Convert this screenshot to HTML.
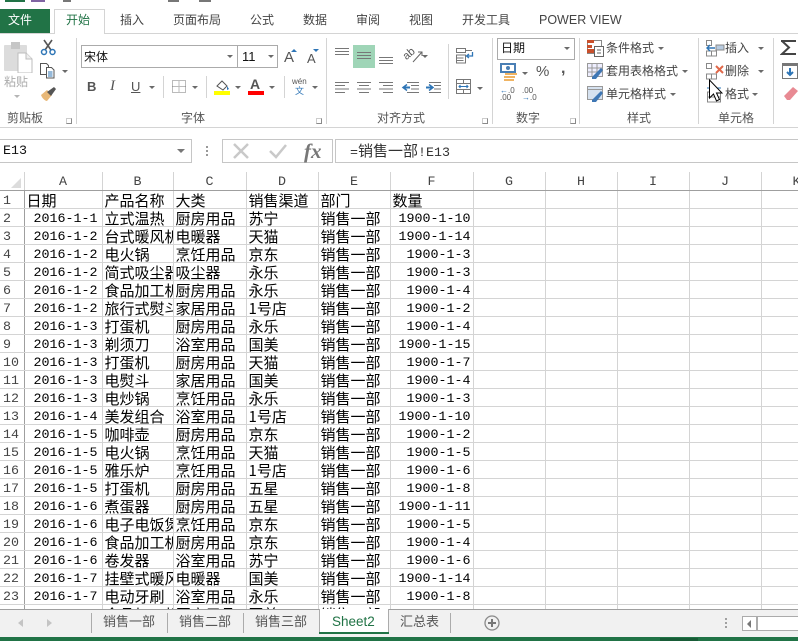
<!DOCTYPE html>
<html lang="zh"><head><meta charset="utf-8"><title>Excel</title>
<style>
html,body{margin:0;padding:0;background:#fff}
#r{position:relative;width:798px;height:641px;overflow:hidden;background:#fff;font-family:"Liberation Sans","Noto Sans CJK SC",sans-serif;color:#444}
#r>*{position:absolute}
.t{font-size:12px;line-height:16px;white-space:nowrap;color:#444}
.l{background:#d4d4d4;width:1px}
.c{width:0;height:0;border-left:3px solid transparent;border-right:3px solid transparent;border-top:3px solid #6a6a6a}
.g{width:6px;height:6px;border:1px solid #8a8a8a;border-top-color:#ccc;border-left-color:#ccc;box-sizing:border-box}
table{border-collapse:collapse;table-layout:fixed;left:0;top:172px;width:832px}
td,th{padding:2px 0 0 2px;height:18px;line-height:15px;box-sizing:border-box;border-right:1px solid #d4d4d4;border-bottom:1px solid #d4d4d4;overflow:hidden;white-space:nowrap;font-weight:normal;color:#000;font-family:"WenQuanYi Zen Hei","Noto Sans CJK SC",sans-serif;font-size:15px;text-align:left}
th{text-align:center;color:#444;font-family:"Liberation Mono",monospace;font-size:13.33px;padding:4px 0 0;line-height:13px}
tr.h th{color:#444;border-bottom:1px solid #9f9f9f}
th.n{border-right:1px solid #9f9f9f;text-align:left;padding-left:3px}
td.d,td.q{text-align:right;font-family:"Liberation Mono",monospace;font-size:13.33px;padding:4px 2px 0 0;line-height:13px}
td.d{padding-right:4px}
</style></head><body><div id="r">

<!-- cropped QAT -->
<div style="left:5px;top:0;width:20px;height:2px;background:#217346"></div>
<div style="left:31px;top:0;width:14px;height:2px;background:#8064a2"></div>
<div style="left:63px;top:0;width:8px;height:2px;background:#777"></div>
<div style="left:168px;top:0;width:11px;height:2px;background:#777"></div>
<div style="left:199px;top:0;width:12px;height:2px;background:#777"></div>

<!-- Tabs -->
<div style="left:0;top:9px;width:50px;height:25px;background:#217346"></div>
<div class="t" style="left:8px;top:12px;color:#fff">文件</div>
<div style="left:54px;top:9px;width:51px;height:25px;background:#fff;border:1px solid #d4d4d4;border-bottom:none;box-sizing:border-box"></div>
<div style="left:0;top:33px;width:54px;height:1px;background:#d4d4d4"></div>
<div style="left:105px;top:33px;width:693px;height:1px;background:#d4d4d4"></div>
<div class="t" style="left:66px;top:12px;color:#217346">开始</div>
<div class="t" style="left:120px;top:12px">插入</div>
<div class="t" style="left:173px;top:12px">页面布局</div>
<div class="t" style="left:250px;top:12px">公式</div>
<div class="t" style="left:303px;top:12px">数据</div>
<div class="t" style="left:356px;top:12px">审阅</div>
<div class="t" style="left:409px;top:12px">视图</div>
<div class="t" style="left:462px;top:12px">开发工具</div>
<div class="t" style="left:539px;top:12px;font-size:12.5px">POWER VIEW</div>

<!-- Ribbon bottom / separators -->
<div style="left:0;top:127px;width:798px;height:1px;background:#d4d4d4"></div>
<div class="l" style="left:76px;top:38px;height:86px"></div>
<div class="l" style="left:326px;top:38px;height:86px"></div>
<div class="l" style="left:492px;top:38px;height:86px"></div>
<div class="l" style="left:579px;top:38px;height:86px"></div>
<div class="l" style="left:698px;top:38px;height:86px"></div>
<div class="l" style="left:773px;top:38px;height:86px"></div>

<!-- Clipboard -->
<svg style="left:3px;top:41px" width="31" height="32" viewBox="0 0 31 32"><rect x="1" y="4" width="23" height="26" rx="1" fill="#dcdcdc"/><rect x="8" y="1" width="9" height="7" fill="#c6c6c6"/><path d="M15 12h8l6 6v14H15z" fill="#fff" stroke="#bdbdbd"/><path d="M23 12v6h6" fill="#eee" stroke="#bdbdbd"/></svg>
<div class="t" style="left:4px;top:74px;color:#ababab">粘贴</div>
<div class="c" style="left:14px;top:95px;border-top-color:#b5b5b5;border-left-width:3px"></div>
<svg style="left:40px;top:39px" width="17" height="17" viewBox="0 0 17 17"><path d="M4 1l7 10M12 1L5 11" stroke="#555" stroke-width="1.6" fill="none"/><circle cx="4" cy="13" r="2.5" fill="none" stroke="#2e75b6" stroke-width="1.5"/><circle cx="12.5" cy="13" r="2.5" fill="none" stroke="#2e75b6" stroke-width="1.5"/></svg>
<svg style="left:39px;top:63px" width="17" height="16" viewBox="0 0 17 16"><path d="M1.500 .5h6l2 2v9h-8z" fill="#fff" stroke="#555"/><path d="M7.500 4.500h5l2.500 2.500v8H7.500z" fill="#fff" stroke="#555"/><path d="M9 9h4.500M9 11h4.500M9 13h4.500" stroke="#2e75b6"/></svg>
<div class="c" style="left:62px;top:70px"></div>
<svg style="left:40px;top:86px" width="17" height="16" viewBox="0 0 17 16"><path d="M1 9l6-5 5 5-5 6C5 15 2 12 1 9z" fill="#e8b878"/><path d="M7 6l7-5 2 2-5 7z" fill="#555"/></svg>
<div class="t" style="left:7px;top:110px;color:#555">剪贴板</div>
<div class="g" style="left:66px;top:118px"></div>

<!-- Font -->
<div style="left:81px;top:45px;width:157px;height:23px;border:1px solid #ababab;box-sizing:border-box"></div>
<div style="left:237px;top:45px;width:41px;height:23px;border:1px solid #ababab;box-sizing:border-box"></div>
<div class="t" style="left:84px;top:49px;color:#111">宋体</div>
<div class="c" style="left:227px;top:55px"></div>
<div class="t" style="left:242px;top:49px;color:#111;font-size:13px">11</div>
<div class="c" style="left:268px;top:55px"></div>
<div class="t" style="left:284px;top:50px;font-size:15px;color:#555">A</div>
<div style="left:291px;top:49px;width:0;height:0;border:3px solid transparent;border-bottom:3px solid #2e75b6;border-top:0"></div>
<div class="t" style="left:307px;top:51px;font-size:13px;color:#555">A</div>
<div style="left:313px;top:49px;width:0;height:0;border:3px solid transparent;border-top:3px solid #2e75b6;border-bottom:0"></div>

<div class="t" style="left:87px;top:79px;font-weight:bold;font-size:13px;color:#555">B</div>
<div class="t" style="left:110px;top:78px;font-style:italic;font-family:'Liberation Serif';font-size:15px;color:#555">I</div>
<div class="t" style="left:131px;top:79px;font-size:13px;color:#555;text-decoration:underline">U</div>
<div class="c" style="left:149px;top:86px"></div>
<div class="l" style="left:163px;top:76px;height:22px"></div>
<svg style="left:172px;top:80px" width="14" height="13" viewBox="0 0 14 13"><path d="M.5 .5h13v12H.500zM7 .5v12M.5 6.500h13" fill="none" stroke="#777" stroke-dasharray="1 1"/></svg>
<div class="c" style="left:192px;top:86px"></div>
<div class="l" style="left:206px;top:76px;height:22px"></div>
<svg style="left:215px;top:79px" width="16" height="12" viewBox="0 0 16 12"><path d="M2 7l5-5 5 5-4 4z" fill="#fff" stroke="#555"/><path d="M12 7l2 3-2 1z" fill="#2e75b6"/></svg>
<div style="left:214px;top:91px;width:16px;height:4px;background:#ff0"></div>
<div class="c" style="left:235px;top:86px"></div>
<div class="t" style="left:250px;top:76px;font-weight:bold;font-size:14px;color:#555">A</div>
<div style="left:248px;top:91px;width:16px;height:4px;background:#f00"></div>
<div class="c" style="left:269px;top:86px"></div>
<div class="l" style="left:284px;top:76px;height:22px"></div>
<div class="t" style="left:292px;top:77px;font-size:8px;line-height:9px;color:#555">wén</div>
<div class="t" style="left:295px;top:86px;font-size:9px;line-height:10px;color:#2e75b6">文</div>
<div class="c" style="left:312px;top:86px"></div>
<div class="t" style="left:181px;top:110px;color:#555">字体</div>
<div class="g" style="left:316px;top:118px"></div>

<!-- Alignment -->
<div style="left:353px;top:45px;width:22px;height:23px;background:#9fd5b7"></div>
<svg style="left:333px;top:44px" width="110" height="52" viewBox="0 0 110 52" stroke="#777" fill="none">
<path d="M2 4.500h14M2 7.500h14M2 10.500h14"/>
<path d="M24 8.500h14M24 11.500h14M24 14.500h14"/>
<path d="M46 13.500h14M46 16.500h14M46 19.500h14"/>
<path d="M2 38.500h14M2 41.500h10M2 45h14M2 48.500h10"/>
<path d="M24 38.500h14M26 41.500h10M24 45h14M26 48.500h10"/>
<path d="M46 38.500h14M50 41.500h10M46 45h14M50 48.500h10"/>
<path d="M71 43.500h6" stroke="#2e75b6" stroke-width="2"/><path d="M74 40.500l-4 3 4 3" stroke="#2e75b6" stroke-width="1.500"/>
<path d="M74 38.500h12M78 41.500h8M78 45h8M74 48.500h12"/>
<path d="M93 43.500h6" stroke="#2e75b6" stroke-width="2"/><path d="M96 40.500l4 3-4 3" stroke="#2e75b6" stroke-width="1.500"/>
<path d="M96 38.500h12M101 41.500h7M101 45h7M96 48.500h12"/>
</svg>
<div class="t" style="left:403px;top:46px;font-size:11px;color:#555;transform:rotate(-40deg)">ab</div>
<svg style="left:412px;top:50px" width="12" height="14" viewBox="0 0 12 14"><path d="M1 12L10 2M6 2h4v4" stroke="#666" fill="none"/></svg>
<div class="c" style="left:422px;top:55px"></div>
<div class="l" style="left:448px;top:44px;height:55px"></div>
<svg style="left:456px;top:47px" width="18" height="17" viewBox="0 0 18 17" fill="none"><path d="M.5 1.500h9v4h-9zM.5 8h9v8h-9z" stroke="#777"/><path d="M9.500 3.500H16M.5 11h7M.5 13.500h7" stroke="#777"/><path d="M16.500 5v4H11M13 7l-2.500 2 2.500 2" stroke="#2e75b6" stroke-width="1.300"/></svg>
<svg style="left:456px;top:79px" width="16" height="16" viewBox="0 0 16 16" fill="none"><path d="M.5 .5h14v14H.5zM.5 4.500h14M.5 10.500h14M7.500 .5v4M7.500 10.500v4" stroke="#777"/><path d="M3 7.500h9M4.500 6L3 7.500 4.500 9M10.500 6L12 7.500 10.500 9" stroke="#2e75b6"/></svg>
<div class="c" style="left:477px;top:87px"></div>
<div class="t" style="left:377px;top:110px;color:#555">对齐方式</div>
<div class="g" style="left:482px;top:118px"></div>

<!-- Number -->
<div style="left:497px;top:38px;width:78px;height:22px;border:1px solid #ababab;box-sizing:border-box"></div>
<div class="t" style="left:501px;top:40px;color:#111">日期</div>
<div class="c" style="left:564px;top:47px"></div>
<svg style="left:500px;top:63px" width="18" height="18" viewBox="0 0 18 18"><rect x="0" y="0" width="16" height="10" fill="#4a7fb5"/><rect x="2" y="2" width="12" height="6" fill="#fff"/><circle cx="8" cy="5" r="2" fill="#4a7fb5"/><path d="M5 10h12v2H5zM4 13h11v2H4zM4 16h10v2H4z" fill="#f0b463"/></svg>
<div class="c" style="left:522px;top:72px"></div>
<div class="t" style="left:536px;top:64px;font-size:15px;color:#555">%</div>
<div class="t" style="left:561px;top:61px;font-size:16px;font-weight:bold;color:#555">,</div>
<div class="t" style="left:500px;top:87px;font-size:8px;line-height:7px;color:#555"><span style="color:#2e75b6">←</span>.0<br>.00</div>
<div class="t" style="left:522px;top:87px;font-size:8px;line-height:7px;color:#555">.00<br><span style="color:#2e75b6">→</span>.0</div>
<div class="t" style="left:516px;top:110px;color:#555">数字</div>
<div class="g" style="left:570px;top:118px"></div>

<!-- Styles -->
<svg style="left:587px;top:40px" width="17" height="17" viewBox="0 0 17 17"><rect x=".5" y=".5" width="14" height="13" fill="#fff" stroke="#888"/><rect x="0" y="0" width="7" height="3" fill="#c9502c"/><rect x="0" y="5" width="5" height="3" fill="#c9502c"/><rect x="0" y="9" width="7" height="4" fill="#c9502c"/><rect x="7.500" y="6.500" width="9" height="10" fill="#fff" stroke="#666"/><path d="M10 10h4M10 13h4" stroke="#666"/></svg>
<div class="t" style="left:606px;top:40px">条件格式</div>
<div class="c" style="left:658px;top:47px"></div>
<svg style="left:587px;top:63px" width="17" height="17" viewBox="0 0 17 17"><path d="M.5 .5h15v13H.500zM5 .5v13M10 .5v13M.5 5h15M.5 9h15" fill="#eef" stroke="#999"/><path d="M5 14l9-9 2 2-7 9H5z" fill="#3f77b4"/></svg>
<div class="t" style="left:606px;top:63px">套用表格格式</div>
<div class="c" style="left:682px;top:70px"></div>
<svg style="left:587px;top:86px" width="17" height="17" viewBox="0 0 17 17"><path d="M.5 .5h15v13H.500z" fill="#d6e2f0" stroke="#999"/><path d="M.5 3.500h15" stroke="#999"/><path d="M5 14l9-9 2 2-7 9H5z" fill="#3f77b4"/></svg>
<div class="t" style="left:606px;top:86px">单元格样式</div>
<div class="c" style="left:670px;top:93px"></div>
<div class="t" style="left:627px;top:110px;color:#555">样式</div>

<!-- Cells -->
<svg style="left:706px;top:40px" width="20" height="17" viewBox="0 0 20 17" fill="none"><path d="M.5 .5h5v5h-5zM.5 11h5v5h-5zM5.500 11h5v5h-5z" stroke="#888"/><rect x="10" y="5" width="8" height="5" fill="#b8cbe0" stroke="#888"/><path d="M1 8h8M4 5L1 8l3 3" stroke="#2e75b6" stroke-width="1.400"/></svg>
<div class="t" style="left:725px;top:40px">插入</div>
<div class="c" style="left:758px;top:47px"></div>
<svg style="left:706px;top:63px" width="20" height="17" viewBox="0 0 20 17" fill="none"><path d="M.5 .5h5v5h-5zM.5 11h5v5h-5zM5.500 11h5v5h-5z" stroke="#888"/><path d="M10 3l7 7M17 3l-7 7" stroke="#e0684a" stroke-width="2"/></svg>
<div class="t" style="left:725px;top:63px">删除</div>
<div class="c" style="left:758px;top:70px"></div>
<svg style="left:706px;top:86px" width="20" height="17" viewBox="0 0 20 17" fill="none"><path d="M1.500 6h13v10h-13zM1.500 11h13" stroke="#888"/><path d="M1 2h4M9 2h6" stroke="#2e75b6"/></svg>
<div class="t" style="left:725px;top:86px">格式</div>
<div class="c" style="left:752px;top:93px"></div>
<div class="t" style="left:718px;top:110px;color:#555">单元格</div>
<svg style="left:708px;top:79px" width="15" height="24" viewBox="0 0 15 24"><path d="M1.500 1v18l4-4 3 7 3-1.500-3-6.500h5.500z" fill="#fff" stroke="#000"/></svg>

<!-- Editing -->
<svg style="left:780px;top:40px" width="18" height="15" viewBox="0 0 18 15"><path d="M1 1h15M2 1l7 6.500L2 14h14" fill="none" stroke="#444" stroke-width="2"/></svg>
<svg style="left:782px;top:63px" width="16" height="17" viewBox="0 0 16 17"><rect x=".5" y=".5" width="15" height="15" fill="#fff" stroke="#777"/><rect x="0" y="0" width="16" height="3" fill="#777"/><path d="M8 5v7M5 9l3 3 3-3" stroke="#2e75b6" stroke-width="2" fill="none"/></svg>
<svg style="left:783px;top:86px" width="15" height="15" viewBox="0 0 15 15"><path d="M1 10L10 1l5 4-8 9H4z" fill="#e88a93"/></svg>

<!-- Formula bar -->
<div style="left:-2px;top:139px;width:194px;height:24px;border:1px solid #c6c6c6;box-sizing:border-box"></div>
<div style="left:3px;top:144px;font:13.33px/16px 'Liberation Mono',monospace;color:#111">E13</div>
<div class="c" style="left:177px;top:149px;border-left-width:4px;border-right-width:4px;border-top:4px solid #777"></div>
<div style="left:206px;top:146px;width:2px;height:2px;background:#999;box-shadow:0 4px #999,0 8px #999"></div>
<div style="left:222px;top:139px;width:111px;height:24px;border:1px solid #c6c6c6;box-sizing:border-box"></div>
<svg style="left:232px;top:143px" width="18" height="16" viewBox="0 0 18 16"><path d="M2 1l14 14M16 1L2 15" stroke="#c9c9c9" stroke-width="2.500"/></svg>
<svg style="left:268px;top:143px" width="20" height="16" viewBox="0 0 20 16"><path d="M2 8l6 6L18 2" fill="none" stroke="#c9c9c9" stroke-width="2.500"/></svg>
<div style="left:304px;top:139px;font:italic bold 21px/24px 'Liberation Serif',serif;color:#777">fx</div>
<div style="left:335px;top:139px;width:470px;height:24px;border:1px solid #c6c6c6;box-sizing:border-box"></div>
<div style="left:350px;top:144px;font:13.33px/16px 'Liberation Mono','WenQuanYi Zen Hei',monospace;color:#333">=<span style="font-size:15px;font-family:'WenQuanYi Zen Hei'">销售一部</span>!E13</div>

<!-- Corner -->
<svg style="left:10px;top:177px" width="12" height="12"><path d="M11 1v10H1z" fill="#dcdcdc"/></svg>

<!-- Grid -->
<table>
<colgroup><col style="width:24px"><col style="width:78px"><col style="width:71px"><col style="width:73px"><col style="width:72px"><col style="width:72px"><col style="width:83px"><col style="width:72px"><col style="width:72px"><col style="width:72px"><col style="width:72px"><col style="width:71px"></colgroup>
<tr class="h"><th style="border-right:1px solid #d4d4d4"></th><th>A</th><th>B</th><th>C</th><th>D</th><th>E</th><th>F</th><th>G</th><th>H</th><th>I</th><th>J</th><th>K</th></tr>
<tr><th class="n">1</th><td>日期</td><td>产品名称</td><td>大类</td><td>销售渠道</td><td>部门</td><td>数量</td><td></td><td></td><td></td><td></td><td></td></tr>
<tr><th class="n">2</th><td class="d">2016-1-1</td><td>立式温热</td><td>厨房用品</td><td>苏宁</td><td>销售一部</td><td class="q">1900-1-10</td><td></td><td></td><td></td><td></td><td></td></tr>
<tr><th class="n">3</th><td class="d">2016-1-2</td><td>台式暖风机</td><td>电暖器</td><td>天猫</td><td>销售一部</td><td class="q">1900-1-14</td><td></td><td></td><td></td><td></td><td></td></tr>
<tr><th class="n">4</th><td class="d">2016-1-2</td><td>电火锅</td><td>烹饪用品</td><td>京东</td><td>销售一部</td><td class="q">1900-1-3</td><td></td><td></td><td></td><td></td><td></td></tr>
<tr><th class="n">5</th><td class="d">2016-1-2</td><td>简式吸尘器</td><td>吸尘器</td><td>永乐</td><td>销售一部</td><td class="q">1900-1-3</td><td></td><td></td><td></td><td></td><td></td></tr>
<tr><th class="n">6</th><td class="d">2016-1-2</td><td>食品加工机</td><td>厨房用品</td><td>永乐</td><td>销售一部</td><td class="q">1900-1-4</td><td></td><td></td><td></td><td></td><td></td></tr>
<tr><th class="n">7</th><td class="d">2016-1-2</td><td>旅行式熨斗</td><td>家居用品</td><td>1号店</td><td>销售一部</td><td class="q">1900-1-2</td><td></td><td></td><td></td><td></td><td></td></tr>
<tr><th class="n">8</th><td class="d">2016-1-3</td><td>打蛋机</td><td>厨房用品</td><td>永乐</td><td>销售一部</td><td class="q">1900-1-4</td><td></td><td></td><td></td><td></td><td></td></tr>
<tr><th class="n">9</th><td class="d">2016-1-3</td><td>剃须刀</td><td>浴室用品</td><td>国美</td><td>销售一部</td><td class="q">1900-1-15</td><td></td><td></td><td></td><td></td><td></td></tr>
<tr><th class="n">10</th><td class="d">2016-1-3</td><td>打蛋机</td><td>厨房用品</td><td>天猫</td><td>销售一部</td><td class="q">1900-1-7</td><td></td><td></td><td></td><td></td><td></td></tr>
<tr><th class="n">11</th><td class="d">2016-1-3</td><td>电熨斗</td><td>家居用品</td><td>国美</td><td>销售一部</td><td class="q">1900-1-4</td><td></td><td></td><td></td><td></td><td></td></tr>
<tr><th class="n">12</th><td class="d">2016-1-3</td><td>电炒锅</td><td>烹饪用品</td><td>永乐</td><td>销售一部</td><td class="q">1900-1-3</td><td></td><td></td><td></td><td></td><td></td></tr>
<tr><th class="n">13</th><td class="d">2016-1-4</td><td>美发组合</td><td>浴室用品</td><td>1号店</td><td>销售一部</td><td class="q">1900-1-10</td><td></td><td></td><td></td><td></td><td></td></tr>
<tr><th class="n">14</th><td class="d">2016-1-5</td><td>咖啡壶</td><td>厨房用品</td><td>京东</td><td>销售一部</td><td class="q">1900-1-2</td><td></td><td></td><td></td><td></td><td></td></tr>
<tr><th class="n">15</th><td class="d">2016-1-5</td><td>电火锅</td><td>烹饪用品</td><td>天猫</td><td>销售一部</td><td class="q">1900-1-5</td><td></td><td></td><td></td><td></td><td></td></tr>
<tr><th class="n">16</th><td class="d">2016-1-5</td><td>雅乐炉</td><td>烹饪用品</td><td>1号店</td><td>销售一部</td><td class="q">1900-1-6</td><td></td><td></td><td></td><td></td><td></td></tr>
<tr><th class="n">17</th><td class="d">2016-1-5</td><td>打蛋机</td><td>厨房用品</td><td>五星</td><td>销售一部</td><td class="q">1900-1-8</td><td></td><td></td><td></td><td></td><td></td></tr>
<tr><th class="n">18</th><td class="d">2016-1-6</td><td>煮蛋器</td><td>厨房用品</td><td>五星</td><td>销售一部</td><td class="q">1900-1-11</td><td></td><td></td><td></td><td></td><td></td></tr>
<tr><th class="n">19</th><td class="d">2016-1-6</td><td>电子电饭煲</td><td>烹饪用品</td><td>京东</td><td>销售一部</td><td class="q">1900-1-5</td><td></td><td></td><td></td><td></td><td></td></tr>
<tr><th class="n">20</th><td class="d">2016-1-6</td><td>食品加工机</td><td>厨房用品</td><td>京东</td><td>销售一部</td><td class="q">1900-1-4</td><td></td><td></td><td></td><td></td><td></td></tr>
<tr><th class="n">21</th><td class="d">2016-1-6</td><td>卷发器</td><td>浴室用品</td><td>苏宁</td><td>销售一部</td><td class="q">1900-1-6</td><td></td><td></td><td></td><td></td><td></td></tr>
<tr><th class="n">22</th><td class="d">2016-1-7</td><td>挂壁式暖风</td><td>电暖器</td><td>国美</td><td>销售一部</td><td class="q">1900-1-14</td><td></td><td></td><td></td><td></td><td></td></tr>
<tr><th class="n">23</th><td class="d">2016-1-7</td><td>电动牙刷</td><td>浴室用品</td><td>永乐</td><td>销售一部</td><td class="q">1900-1-8</td><td></td><td></td><td></td><td></td><td></td></tr>
<tr><th class="n">24</th><td class="d">2016-1-7</td><td>食品加工机</td><td>厨房用品</td><td>国美</td><td>销售一部</td><td class="q">1900-1-4</td><td></td><td></td><td></td><td></td><td></td></tr>
</table>

<!-- Sheet tabs bar -->
<div style="left:0;top:609px;width:798px;height:28px;background:#f1f1f1;border-top:1px solid #9f9f9f;box-sizing:border-box"></div>
<div style="left:0;top:637px;width:798px;height:4px;background:#217346"></div>
<div style="left:660px;top:638px;width:38px;height:3px;background:#185c37"></div>
<div style="left:18px;top:619px;width:0;height:0;border:4px solid transparent;border-right:5px solid #c4c4c4;border-left:0"></div>
<div style="left:47px;top:619px;width:0;height:0;border:4px solid transparent;border-left:5px solid #c4c4c4;border-right:0"></div>
<div style="left:91px;top:613px;width:1px;height:20px;background:#ababab"></div>
<div style="left:167px;top:613px;width:1px;height:20px;background:#ababab"></div>
<div style="left:243px;top:613px;width:1px;height:20px;background:#ababab"></div>
<div class="t" style="left:103px;top:614px;font-size:13px;color:#555">销售一部</div>
<div class="t" style="left:179px;top:614px;font-size:13px;color:#555">销售二部</div>
<div class="t" style="left:255px;top:614px;font-size:13px;color:#555">销售三部</div>
<div style="left:319px;top:609px;width:70px;height:25px;background:#fff;border:1px solid #ababab;border-top:none;border-bottom:none;box-sizing:border-box"></div>
<div style="left:319px;top:632px;width:70px;height:2px;background:#217346"></div>
<div class="t" style="left:332px;top:614px;font-size:13.5px;color:#217346">Sheet2</div>
<div class="t" style="left:400px;top:614px;font-size:13px;color:#555">汇总表</div>
<div style="left:450px;top:613px;width:1px;height:20px;background:#ababab"></div>
<svg style="left:484px;top:615px" width="16" height="16" viewBox="0 0 16 16"><circle cx="8" cy="8" r="7" fill="none" stroke="#8a8a8a" stroke-width="1.300"/><path d="M4 8h8M8 4v8" stroke="#777" stroke-width="2"/></svg>
<div style="left:725px;top:618px;width:2px;height:2px;background:#a0a0a0;box-shadow:0 4px #a0a0a0,0 8px #a0a0a0"></div>
<div style="left:742px;top:616px;width:60px;height:15px;background:#fff;border:1px solid #ababab;box-sizing:border-box"></div>
<div style="left:756px;top:616px;width:2px;height:15px;background:#ababab"></div>
<div style="left:747px;top:620px;width:0;height:0;border:4px solid transparent;border-right:4px solid #777;border-left:0"></div>
</div></body></html>
